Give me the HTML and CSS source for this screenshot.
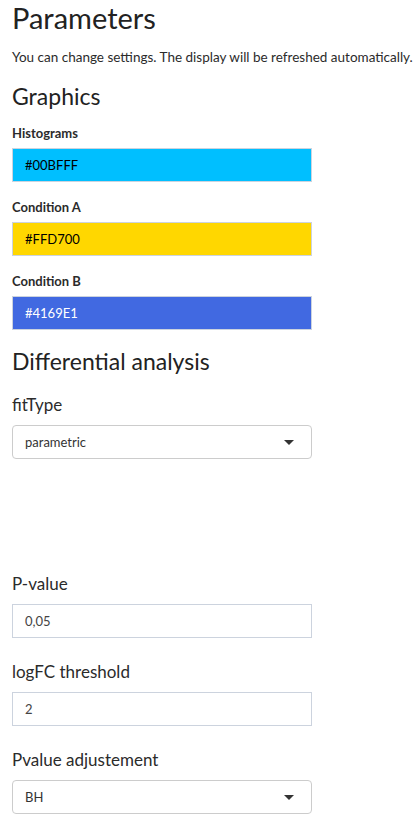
FILE: index.html
```html
<!DOCTYPE html>
<html>
<head>
<meta charset="utf-8">
<link rel="stylesheet" href="styles.css">
</head>
<body>
<div class="page">
  <h1 class="title">Parameters</h1>
  <p class="lead">You can change settings. The display will be refreshed automatically.</p>

  <h2 class="section">Graphics</h2>
  <div class="group colors">
    <div class="field">
      <label class="blabel">Histograms</label>
      <div class="colorbox" style="background:#00BFFF;color:#000">#00BFFF</div>
    </div>
    <div class="field">
      <label class="blabel">Condition A</label>
      <div class="colorbox" style="background:#FFD700;color:#000">#FFD700</div>
    </div>
    <div class="field">
      <label class="blabel">Condition B</label>
      <div class="colorbox" style="background:#4169E1;color:#fff">#4169E1</div>
    </div>
  </div>

  <h2 class="section section-2">Differential analysis</h2>
  <div class="group first">
    <div class="field">
      <label class="rlabel">fitType</label>
      <div class="select"><span>parametric</span><span class="caret"></span></div>
    </div>
  </div>
  <div class="spacer"></div>
  <div class="group inputs">
    <div class="field">
      <label class="rlabel">P-value</label>
      <div class="textin">0,05</div>
    </div>
    <div class="field">
      <label class="rlabel">logFC threshold</label>
      <div class="textin">2</div>
    </div>
    <div class="field">
      <label class="rlabel">Pvalue adjustement</label>
      <div class="select"><span>BH</span><span class="caret"></span></div>
    </div>
  </div>
</div>
</body>
</html>
```
FILE: styles.css
```css
html, body {
  margin: 0;
  padding: 0;
  background: #fff;
}
body {
  font-family: Lato, "Open Sans", sans-serif;
  color: #2b2b2b;
}
.page {
  padding: 0 12px;
  display: flex;
  flex-direction: column;
}
.title {
  margin: 0;
  font-size: 29px;
  font-weight: 400;
  line-height: 36px;
  color: #222;
}
.lead {
  margin: 12px 0 0;
  font-size: 13.5px;
  white-space: nowrap;
  line-height: 18px;
  color: #2b2b2b;
}
.section {
  margin: 16px 0 0;
  font-size: 23px;
  font-weight: 400;
  line-height: 28px;
  color: #222;
}
.section-2 {
  margin-top: 17px;
}
.group {
  display: flex;
  flex-direction: column;
}
.colors {
  margin-top: 14px;
  gap: 16px;
}
.first {
  margin-top: 19px;
}
.inputs {
  gap: 23px;
}
.field {
  display: flex;
  flex-direction: column;
  width: 300px;
}
.blabel {
  font-size: 13px;
  font-weight: 700;
  line-height: 18px;
  color: #2b2b2b;
  margin-bottom: 6px;
}
.rlabel {
  font-size: 17px;
  line-height: 22px;
  color: #2b2b2b;
  margin-bottom: 9px;
}
.colorbox {
  height: 34px;
  box-sizing: border-box;
  border: 1px solid #ccd3de;
  padding: 0 12px;
  display: flex;
  align-items: center;
  font-size: 13px;
}
.select {
  height: 34px;
  box-sizing: border-box;
  border: 1px solid #ccc;
  border-radius: 4px;
  padding: 0 12px;
  display: flex;
  align-items: center;
  justify-content: space-between;
  font-size: 13px;
  color: #333;
}
.caret {
  width: 0;
  height: 0;
  border-left: 5.5px solid transparent;
  border-right: 5.5px solid transparent;
  border-top: 5.5px solid #333;
  margin-right: 5px;
}
.textin {
  height: 34px;
  box-sizing: border-box;
  border: 1px solid #ccd3de;
  padding: 0 12px;
  display: flex;
  align-items: center;
  font-size: 13px;
  color: #444;
}
.spacer {
  height: 114px;
}
```
